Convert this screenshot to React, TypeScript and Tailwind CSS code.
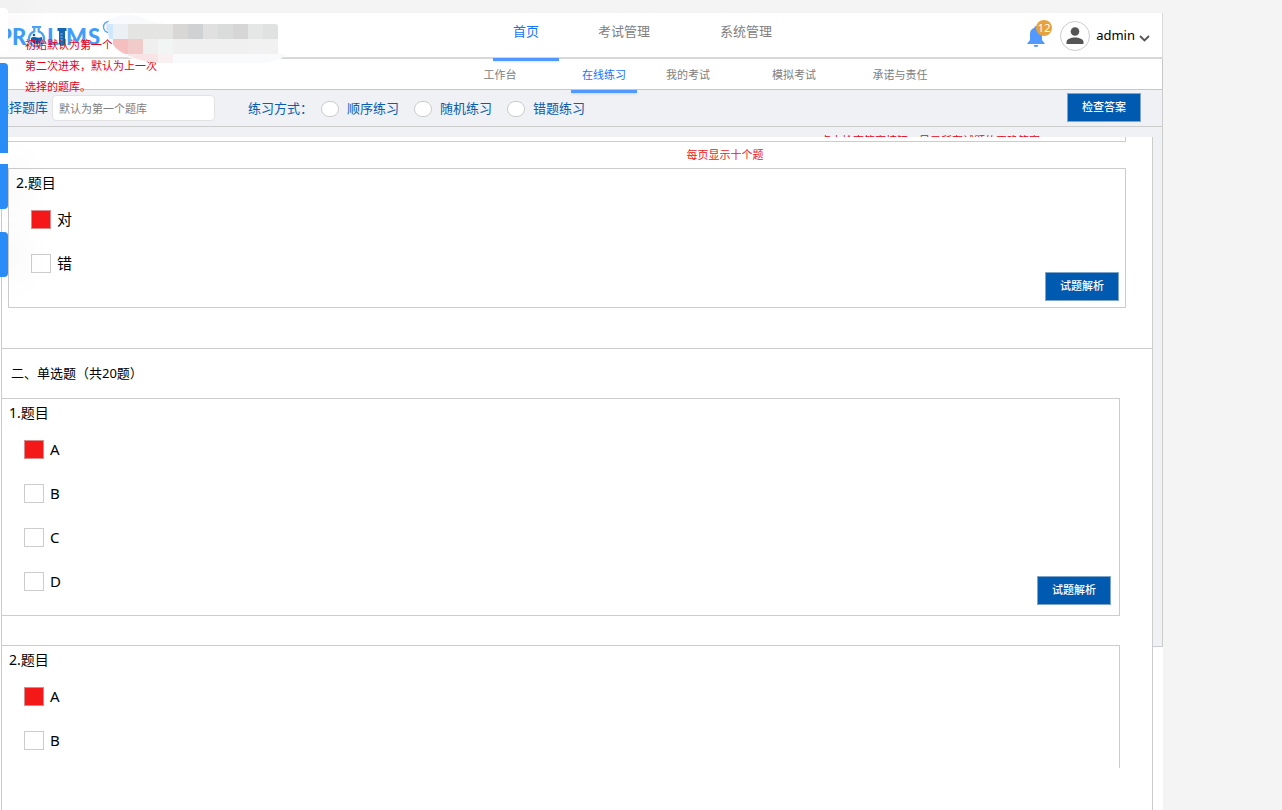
import { useState } from "react";
import clsx from "clsx";

type Tab = { label: string; className?: string };

const MAIN_TABS: Tab[] = [
  { label: "首页" },
  { label: "考试管理", className: "ml-8" },
  { label: "系统管理", className: "ml-14" },
];

const SUB_TABS: Tab[] = [
  { label: "工作台" },
  { label: "在线练习", className: "ml-[38px]" },
  { label: "我的考试", className: "ml-[18px]" },
  { label: "模拟考试", className: "ml-10" },
  { label: "承诺与责任", className: "ml-10" },
];

const MODES = ["顺序练习", "随机练习", "错题练习"];

// [x, y, width, fill]
const MASK_BLOCKS: [number, number, number, string][] = [
  [8, 9, 15, "#ebf0f4"],
  [23, 9, 45, "#e4e4e3"],
  [68, 9, 15, "#d8d7d6"],
  [83, 9, 15, "#d0d1d2"],
  [98, 9, 15, "#e0e0e1"],
  [113, 9, 15, "#dadbdb"],
  [128, 9, 15, "#d6d6d6"],
  [143, 9, 15, "#e4e7e6"],
  [158, 9, 15, "#e0e2e1"],
  [8, 24, 15, "#f5bfbf"],
  [23, 24, 15, "#f1caca"],
  [38, 24, 15, "#eeefee"],
  [53, 24, 15, "#f1f5f3"],
  [68, 24, 75, "#f0f0f0"],
  [143, 24, 30, "#f1f1f1"],
  [23, 39, 30, "#f8e4e5"],
  [53, 39, 15, "#f9f0f2"],
];

const Logo = () => (
  <svg width="118" height="34" viewBox="0 0 118 34" aria-label="PROLIMS">
    <g fontFamily="Lato, sans-serif" fontWeight="900" fontSize="22" fill="#3f9dfb">
      <text x="-2" y="29">P</text>
      <text x="12" y="29">R</text>
      <text x="47" y="29">L</text>
      <text x="66" y="29">M</text>
      <text x="88" y="29">S</text>
    </g>
    <path
      d="M32 11h9M34.300 11v4.500a7.600 7.600 0 1 0 4.400 0V11"
      fill="none"
      stroke="#4ba3f8"
      strokeWidth="2.200"
    />
    <path d="M31 22c3-2.500 6 1 11-1a5.600 5.600 0 0 1-11 3z" fill="#0d62b5" />
    <circle cx="34" cy="19" r="1.300" fill="#0d62b5" />
    <path d="M57.500 12h9v3H65v12a3 3 0 0 1-6 0V15h-1.500z" fill="#1566b4" />
    <path d="M60.500 18h2M60.500 21h2M60.500 24h2" stroke="#9cc9f5" />
    <circle cx="109" cy="11" r="5.500" fill="none" stroke="#55a8f8" strokeWidth="1.400" />
    <text x="106" y="14" fontFamily="Lato, sans-serif" fontSize="9" fill="#55a8f8">
      R
    </text>
  </svg>
);

const NameMask = () => (
  <svg
    className="absolute left-[105px] top-[2px] z-20"
    width="182"
    height="50"
    viewBox="0 0 182 50"
    aria-hidden="true"
  >
    <path
      d="M2 9Q6 0 22 0Q36 0 46 6L60 9H170Q173 9 173 12V38L181 40Q174 47 156 48L80 48Q40 49 22 42Q4 36 2 9Z"
      fill="#f9fafb"
    />
    <path d="M2 9H8V24H4Z" fill="#cfe7fd" />
    <clipPath id="mask-shape">
      <path d="M2 9H170Q173 9 173 12V48H60Q40 48 22 40Q8 34 4 22Z" />
    </clipPath>
    <g clipPath="url(#mask-shape)">
      {MASK_BLOCKS.map(([x, y, width, fill]) => (
        <rect key={`${x}-${y}`} x={x} y={y} width={width} height="15" fill={fill} />
      ))}
    </g>
  </svg>
);

const UserMenu = () => (
  <div className="ml-auto mr-3 flex items-center pt-0.5">
    <button className="relative mr-3.5 h-7 w-5" aria-label="通知">
      <svg width="20" height="24" viewBox="0 0 20 24" className="mt-0.5" fill="#5299ff">
        <path d="M10 1a1.600 1.600 0 0 1 1.600 1.800C14.600 3.600 16 6 16 9v6l2.600 3.200V19H1.400v-.8L4 15V9c0-3 1.400-5.400 4.400-6.200A1.600 1.600 0 0 1 10 1z" />
        <path d="M7.600 20h4.800a2.400 2 0 0 1-4.800 0z" />
      </svg>
      <span className="absolute -right-1.5 -top-0.5 flex h-4 w-4 items-center justify-center rounded-full bg-[#e6a23c] text-[11px] text-white">
        12
      </span>
    </button>
    <button className="flex items-center gap-1 text-[13px] text-black">
      <span className="mr-0.5 flex h-[30px] w-[30px] items-center justify-center rounded-full border border-[#ccc] bg-white">
        <svg width="18" height="18" viewBox="0 0 18 18" fill="#555">
          <circle cx="9" cy="4.500" r="4.300" />
          <path d="M.5 17v-2C.5 12 5 10.500 9 10.500s8.500 1.500 8.500 4.500v2z" />
        </svg>
      </span>
      admin
      <svg width="11" height="7" viewBox="0 0 11 7" className="mt-1" fill="none">
        <path d="M1 1l4.500 4.500L10 1" stroke="#555" strokeWidth="1.800" />
      </svg>
    </button>
  </div>
);

type TabBarProps = {
  tabs: Tab[];
  active: string;
  className: string;
  onSelect: (label: string) => void;
};

const TabBar = ({ tabs, active, className, onSelect }: TabBarProps) => (
  <nav className={clsx("flex", className)}>
    {tabs.map((tab) => (
      <button
        key={tab.label}
        onClick={() => onSelect(tab.label)}
        className={clsx(
          "relative h-full w-[66px] whitespace-nowrap",
          tab.className,
          tab.label === active ? "text-[#1673ff]" : "text-[#808080]",
        )}
      >
        {tab.label}
        {tab.label === active && (
          <span className="absolute -bottom-1 left-0 z-10 h-[3px] w-full bg-[#5299ff] shadow-sm" />
        )}
      </button>
    ))}
  </nav>
);

const ActionButton = ({ label, className }: { label: string; className?: string }) => (
  <button
    className={clsx(
      "h-[29px] w-[74px] shrink-0 border border-[#7fa5cb] bg-[#005aaf] text-[11px] font-medium text-white",
      className,
    )}
  >
    {label}
  </button>
);

type QuestionProps = {
  id: string;
  title: string;
  options: string[];
  className: string;
  buttonClassName?: string;
  explain?: boolean;
};

const Question = ({
  id,
  title,
  options,
  className,
  buttonClassName,
  explain = true,
}: QuestionProps) => (
  <fieldset className={clsx("flex justify-between border-[#ccc] pt-1", className)}>
    <div>
      <p className="pl-[7px] text-sm leading-5 text-black">{title}</p>
      <div className="pl-[22px] pt-1">
        {options.map((option, i) => (
          <label key={option} className="flex h-11 items-center gap-1.5 text-[15px] text-black">
            <input
              type="radio"
              name={id}
              defaultChecked={i === 0}
              className="h-[19px] w-5 appearance-none border border-[#ccc] bg-white checked:border-[#d98a8a] checked:bg-[#f51818]"
            />
            {option}
          </label>
        ))}
      </div>
    </div>
    {explain && <ActionButton label="试题解析" className={clsx("self-end", buttonClassName)} />}
  </fieldset>
);

// Collapsed side menu that floats over the left edge
const SideRail = () => (
  <aside className="absolute left-0 top-0 z-30 w-2 pt-2">
    <div className="h-[45px] rounded-r-sm bg-white shadow-[4px_0_40px_rgba(0,0,0,0.15)]" />
    <div className="mt-2.5 h-[90px] rounded-tr-sm bg-[#2a8cf7]" />
    <div className="h-[11px] bg-white" />
    <div className="h-[45px] rounded-br-sm bg-[#2a8cf7] shadow-[4px_0_40px_rgba(0,0,0,0.15)]" />
    <div className="mt-[23px] h-[45px] rounded-r-sm bg-[#2a8cf7] shadow-[4px_0_40px_rgba(0,0,0,0.15)]" />
  </aside>
);

const FilterBar = () => (
  <form className="flex h-[37px] items-center border-b border-r border-[#ccc] bg-[#eff1f5] pr-[21px] text-[13px] text-[#0b5cad]">
    <label htmlFor="bank" className="-ml-1 mr-1 whitespace-nowrap">
      选择题库
    </label>
    <input
      id="bank"
      placeholder="默认为第一个题库"
      className="h-[26px] w-[163px] rounded border border-[#e2e2e2] bg-white px-1.5 text-[11px] placeholder:text-[#808080]"
    />
    <span className="ml-[33px] w-[73px] whitespace-nowrap pt-0.5">练习方式：</span>
    <div className="flex gap-[15px] pt-0.5">
      {MODES.map((mode) => (
        <label key={mode} className="flex items-center gap-2 whitespace-nowrap">
          <input
            type="radio"
            name="mode"
            className="h-4 w-[18px] appearance-none rounded-full border border-[#ccc] bg-white checked:bg-[#0b5cad]"
          />
          {mode}
        </label>
      ))}
    </div>
    <ActionButton label="检查答案" className="mb-0.5 ml-auto" />
  </form>
);

export default function App() {
  const [mainTab, setMainTab] = useState("首页");
  const [subTab, setSubTab] = useState("在线练习");

  return (
    <div className="relative flex min-h-screen flex-col overflow-hidden bg-[#f4f4f4] pr-[119px] pt-[13px] font-['Noto_Sans','Noto_Sans_CJK_SC',sans-serif]">
      <SideRail />
      <div className="relative flex flex-1 flex-col bg-white">
        <header className="flex h-[46px] items-center border-b-2 border-r border-[#d8d8d8]">
          <div className="w-[493px] pb-1">
            <Logo />
          </div>
          <TabBar
            tabs={MAIN_TABS}
            active={mainTab}
            className="h-full text-[13px] [&>button]:pb-1.5"
            onSelect={setMainTab}
          />
          <UserMenu />
        </header>
        <NameMask />
        <p className="absolute left-[25px] top-[21px] z-10 text-[11px] leading-[21px] text-[#e60012]">
          初始默认为第一个
          <br />
          第二次进来，默认为上一次
          <br />
          选择的题库。
        </p>

        <div className="flex h-[31px] border-b border-r border-[#c8c8c8] pl-[467px]">
          <TabBar
            tabs={SUB_TABS}
            active={subTab}
            className="h-full text-[11px] [&>button]:pt-0.5"
            onSelect={setSubTab}
          />
        </div>
        <FilterBar />
        <div className="flex h-2.5 justify-end overflow-hidden border-r border-[#ccc] bg-[#eff1f5] pr-[122px] pt-1">
          <p className="text-[11px] leading-5 text-[#e60012]">
            点击检查答案按钮，显示所有试题的正确答案
          </p>
        </div>

        <div className="flex flex-1">
          <div className="w-px shrink-0" />
          <main className="flex-1 border-x border-[#ccc]">
            <div className="ml-1.5 mr-[26px] h-[5px] border-b border-r border-[#ccc]" />
            <p className="pl-[296px] text-center text-[11px] leading-[26px] text-[#f01414]">
              每页显示十个题
            </p>
            <Question
              id="judge-2"
              title="2.题目"
              options={["对", "错"]}
              className="ml-1.5 mr-[26px] h-[140px] border pr-1.5"
              buttonClassName="mb-1.5"
            />
            <h2 className="mt-10 border-t border-[#ccc] pl-[9px] text-[13px] leading-[49px] text-black">
              二、单选题（共20题）
            </h2>
            <Question
              id="single-1"
              title="1.题目"
              options={["A", "B", "C", "D"]}
              className="mr-8 h-[218px] border-y border-r pr-2"
              buttonClassName="mb-2.5"
            />
            <Question
              id="single-2"
              title="2.题目"
              options={["A", "B"]}
              className="mr-8 mt-[29px] h-[123px] border-r border-t"
              explain={false}
            />
          </main>
          <div className="h-[510px] w-2.5 shrink-0 border-b border-r border-[#ccc] bg-[#eff1f5]" />
        </div>
      </div>
    </div>
  );
}
